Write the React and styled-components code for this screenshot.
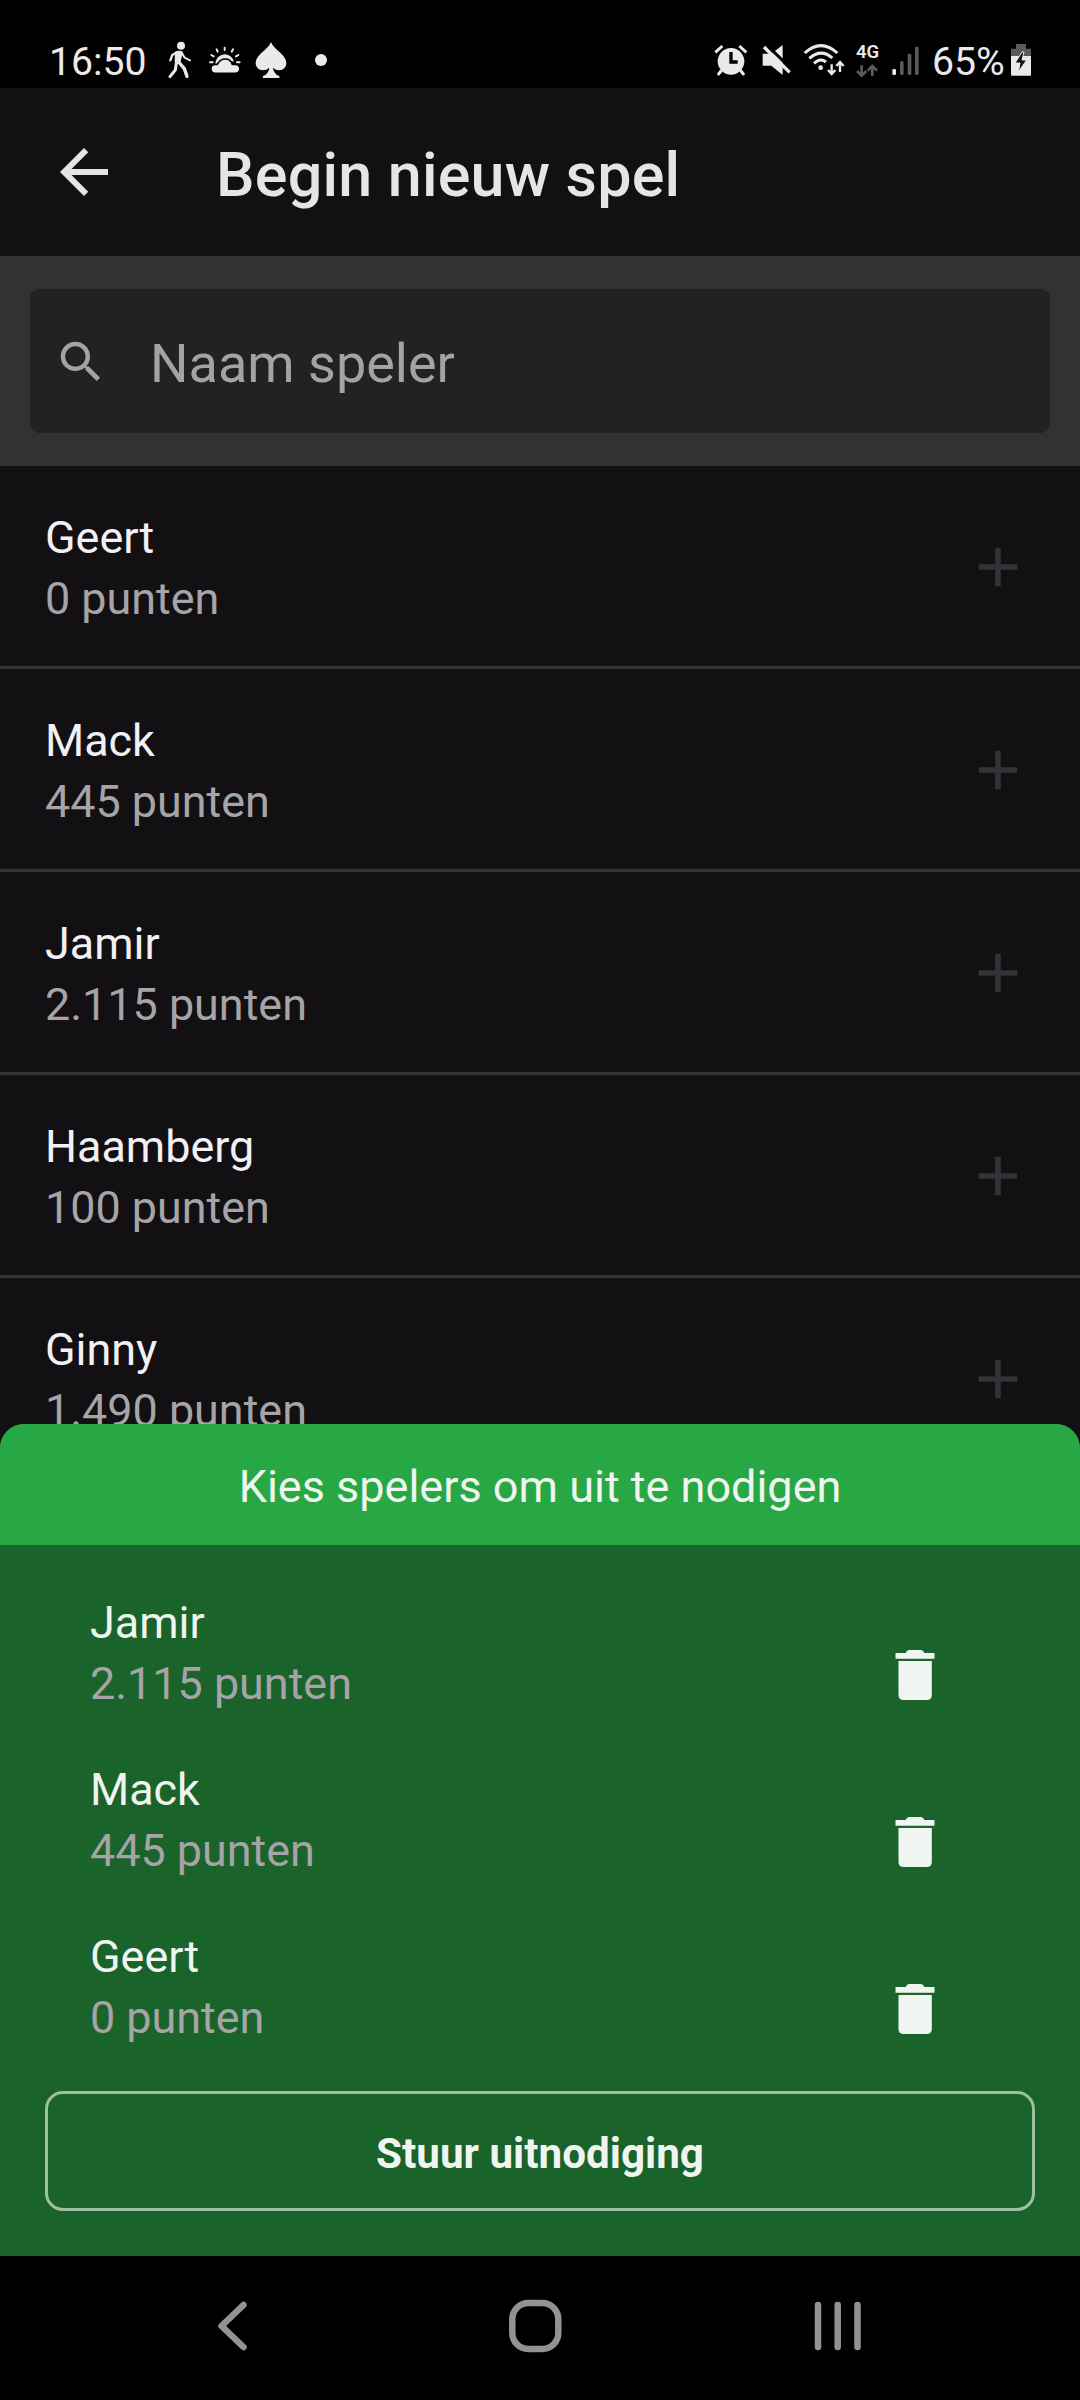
import React from 'react';
import styled, { createGlobalStyle } from 'styled-components';

const GlobalStyle = createGlobalStyle`
  *, *::before, *::after { box-sizing: border-box; }
  html, body { margin: 0; padding: 0; background: #000; }
  button, input { font: inherit; border: 0; margin: 0; padding: 0; background: none; }
`;

const Screen = styled.div`
  display: flex;
  flex-direction: column;
  width: 1080px;
  height: 2400px;
  overflow: hidden;
  background: #121013;
  font-family: Roboto, "Liberation Sans", sans-serif;
  color: #f2f0f3;
`;

const StatusBar = styled.div`
  display: flex;
  align-items: center;
  justify-content: space-between;
  flex: none;
  height: 88px;
  padding: 32px 48px 0 49px;
  background: #000;
  color: #ebe9ec;
`;

const StatusGroup = styled.div`
  display: flex;
  align-items: center;
`;

const StatusText = styled.span`
  width: ${(p) => p.$width}px;
  margin-left: ${(p) => p.$gap || 0}px;
  padding-top: 4px;
  font-size: 39.2px;
  line-height: 46px;
  white-space: nowrap;
`;

const StatusGlyph = styled.svg`
  display: block;
  flex: none;
  height: 38px;
  margin-left: ${(p) => p.$gap}px;
`;

const NetworkType = styled.div`
  display: flex;
  flex-direction: column;
  width: 24px;
  height: 38px;
  margin-left: 10px;
  font-size: 18.5px;
  font-weight: 600;
  line-height: 22px;
`;

const NetworkArrows = styled.svg`
  display: block;
  width: 24px;
  height: 16px;
`;

const Header = styled.header`
  display: flex;
  align-items: center;
  flex: none;
  height: 168px;
  padding: 0 48px;
  gap: 96px;
  color: #e6e4e7;
`;

const Title = styled.h1`
  margin: 5px 0 0;
  font-size: 61px;
  font-weight: 500;
  line-height: 72px;
  letter-spacing: 0.22px;
`;

const Icon = styled.svg`
  display: block;
  flex: none;
  width: ${(p) => p.$size}px;
  height: ${(p) => p.$size}px;
  fill: currentColor;
`;

const SearchBand = styled.div`
  flex: none;
  height: 210px;
  padding: 33px 30px;
  background: #343134;
`;

const SearchField = styled.label`
  display: flex;
  align-items: center;
  gap: 42px;
  height: 144px;
  padding: 2px 24px 0;
  border-radius: 9px;
  background: #232124;
  color: #a4a2a5;
`;

const SearchInput = styled.input`
  flex: 1;
  height: 72px;
  margin-top: 2px;
  font-size: 54px;
  color: #f2f0f3;
  outline: none;
  &::placeholder { color: #a4a2a5; opacity: 1; }
`;

const PlayerList = styled.div`
  flex: 1 1 0;
  min-height: 0;
  overflow: hidden;
`;

const PlayerRow = styled.div`
  display: flex;
  align-items: flex-start;
  justify-content: space-between;
  height: 203px;
  padding: 41px 49px 0 45px;
  border-bottom: 3px solid #343236;
`;

const PlayerText = styled.div`
  display: flex;
  flex-direction: column;
  font-size: 44.9px;
  line-height: 61px;
`;

const Points = styled.span`
  color: #a6a4a6;
`;

const AddButton = styled.button`
  display: block;
  margin-top: 27px;
  color: #343236;
`;

const Sheet = styled.section`
  position: relative;
  display: flex;
  flex-direction: column;
  flex: none;
  height: 832px;
  margin-top: -24px;
  border-radius: 24px 24px 0 0;
  overflow: hidden;
  background: #1a632a;
  color: #f0f5f0;
`;

const SheetTitle = styled.h2`
  flex: none;
  margin: 0;
  height: 121px;
  padding-top: 2px;
  background: #27a844;
  text-align: center;
  font-size: 45px;
  font-weight: 400;
  line-height: 121px;
`;

const InviteList = styled.div`
  display: flex;
  flex-direction: column;
  gap: 45px;
  padding: 47px 145px 0 90px;
`;

const InviteRow = styled.div`
  display: flex;
  justify-content: space-between;
  height: 122px;
`;

const DeleteButton = styled.button`
  display: block;
  align-self: flex-start;
  margin-top: 58px;
  color: #f1f5f1;
`;

const TrashGlyph = styled.svg`
  display: block;
  width: 40px;
  height: 50px;
  fill: currentColor;
`;

const SendButton = styled.button`
  height: 120px;
  margin: 43px 45px 0;
  padding-top: 4px;
  border: 3px solid #9dc0a2;
  border-radius: 18px;
  color: #f0f5f0;
  font-size: 42.2px;
  font-weight: 700;
`;

const NavBar = styled.nav`
  display: flex;
  align-items: center;
  justify-content: space-between;
  flex: none;
  height: 144px;
  padding: 0 217px 4px 216px;
  background: #000;
`;

const NavGlyph = styled.svg`
  display: block;
  width: ${(p) => p.$width}px;
  height: 56px;
  fill: none;
  stroke: #929193;
  stroke-width: 6.5;
  stroke-linecap: round;
  stroke-linejoin: round;
`;

const players = [
  { name: 'Geert', points: '0' },
  { name: 'Mack', points: '445' },
  { name: 'Jamir', points: '2.115' },
  { name: 'Haamberg', points: '100' },
  { name: 'Ginny', points: '1.490' },
];

const invited = [players[2], players[1], players[0]];

function Glyph({ x, width, gap, children }) {
  return (
    <StatusGlyph $gap={gap} width={width / 3} viewBox={`${x} 63 ${width} 114`} fill="none" stroke="none">
      {children}
    </StatusGlyph>
  );
}

function Status() {
  const light = '#ebe9ec';
  const dim = '#5a595b';
  return (
    <StatusBar>
      <StatusGroup>
        <StatusText $width={101}>16:50</StatusText>
        <Glyph x={414} width={72} gap={18}>
          <circle cx="453" cy="77" r="12" fill={light} />
          <path d="M435 95Q449 89 458 95L455 112L452 124L440 136L434 124Z" fill={light} />
          <g stroke={light} strokeLinecap="round" strokeLinejoin="round">
            <path d="M421 121L427 105L441 97" strokeWidth="7" />
            <path d="M455 98L464 113L480 121" strokeWidth="6" />
            <path d="M439 128L436 150L420 170" strokeWidth="9" />
            <path d="M446 126L463 146L471 169" strokeWidth="10" />
          </g>
        </Glyph>
        <Glyph x={537} width={96} gap={17}>
          <path d="M584 83V90M560 88L563 95M609 88L605 95M544 105L551 109M625 105L618 109M540 127H548M621 127H629" stroke={light} strokeWidth="6" strokeLinecap="round" />
          <path d="M556 132a28.500 28.500 0 0 1 56-8z" fill={light} />
          <path d="M556 160a13 13 0 0 1 0-27h6c5-10 14-16 24-16s18 6 21 16h9a13 13 0 0 1 0 27z" fill={light} stroke="#000" strokeWidth="5" />
        </Glyph>
        <Glyph x={675} width={96} gap={14}>
          <path d="M723 66C714 91 677 103 677 129C677 151 703 157 718 143C716 157 709 164 699 168Q696 174 701 174H746Q751 172 748 168C738 164 731 157 729 143C744 157 769 151 769 129C769 103 732 91 723 66Z" fill={light} />
        </Glyph>
        <Glyph x={855} width={36} gap={28}>
          <circle cx="873" cy="120" r="18" fill={light} />
        </Glyph>
      </StatusGroup>
      <StatusGroup>
        <Glyph x={42} width={102} gap={0}>
          <circle cx="93" cy="124" r="40" fill={light} />
          <path d="M46 97L67 78M139 97L118 78" stroke={light} strokeWidth="9" />
          <path d="M63 153L56 162M123 153L130 162" stroke={light} strokeWidth="9" strokeLinecap="round" />
          <path d="M93 96V126H113" stroke="#000" strokeWidth="10" />
        </Glyph>
        <Glyph x={187} width={87} gap={14}>
          <path d="M189 101H215L249 75V165L215 137H189Z" fill={light} />
          <path d="M200 74L277 149" stroke="#000" strokeWidth="9" />
          <path d="M193 81L270 157" stroke={light} strokeWidth="10" />
        </Glyph>
        <Glyph x={309} width={129} gap={12}>
          <g stroke={light} strokeWidth="9">
            <path d="M314 99Q363 55 412 99" />
            <path d="M328 115Q363 84 397 114" />
            <path d="M342 130Q361 112 378 126" />
          </g>
          <circle cx="362" cy="143" r="7" fill={light} />
          <path d="M395 133V160M384 150L395 162L406 150M420 156V127M409 138L420 126L431 138" stroke={light} strokeWidth="7" />
        </Glyph>
        <NetworkType>
          4G
          <NetworkArrows viewBox="0 0 72 48" fill="none" stroke={dim} strokeWidth="8">
            <path d="M17 7V36M3 24L17 38L31 24M49 39V11M35 23L49 9L63 23" />
          </NetworkArrows>
        </NetworkType>
        <Glyph x={576} width={81} gap={12}>
          <rect x="577" y="147" width="11" height="18" rx="4" fill={light} />
          <rect x="600" y="124" width="11" height="41" rx="4" fill={dim} />
          <rect x="623" y="101" width="11" height="64" rx="4" fill={dim} />
          <rect x="645" y="80" width="11" height="85" rx="4" fill={dim} />
        </Glyph>
        <StatusText $width={73} $gap={13}>65%</StatusText>
        <Glyph x={933} width={63} gap={6}>
          <path d="M948 72H978V86H993V110H933V86H948Z" fill={dim} />
          <path d="M933 108H993V164Q993 167 990 167H936Q933 167 933 164Z" fill={light} />
          <path d="M966 96L945 129H960L955 156L980 120H966L972 96Z" fill="#111" stroke={light} strokeWidth="3" />
        </Glyph>
      </StatusGroup>
    </StatusBar>
  );
}

function Player({ player }) {
  return (
    <PlayerText>
      <span>{player.name}</span>
      <Points>{player.points} punten</Points>
    </PlayerText>
  );
}

export default function App() {
  return (
    <>
      <GlobalStyle />
      <Screen>
        <Status />
        <Header>
          <Icon $size={72} viewBox="0 0 24 24">
            <path d="M20 11H7.830l5.590-5.590L12 4l-8 8 8 8 1.410-1.410L7.830 13H20v-2z" />
          </Icon>
          <Title>Begin nieuw spel</Title>
        </Header>
        <SearchBand>
          <SearchField>
            <Icon $size={54} viewBox="0 0 24 24">
              <path d="M15.500 14h-.790l-.280-.270A6.470 6.470 0 0 0 16 9.500 6.500 6.500 0 1 0 9.500 16c1.610 0 3.090-.590 4.230-1.570l.270.280v.790l5 4.990L20.490 19l-4.990-5zm-6 0C7.010 14 5 11.990 5 9.500S7.010 5 9.500 5 14 7.010 14 9.500 11.990 14 9.500 14z" />
            </Icon>
            <SearchInput placeholder="Naam speler" />
          </SearchField>
        </SearchBand>
        <PlayerList>
          {players.map((player) => (
            <PlayerRow key={player.name}>
              <Player player={player} />
              <AddButton aria-label="Toevoegen">
                <Icon $size={66} viewBox="0 0 24 24">
                  <path d="M19 13h-6v6h-2v-6H5v-2h6V5h2v6h6v2z" />
                </Icon>
              </AddButton>
            </PlayerRow>
          ))}
        </PlayerList>
        <Sheet>
          <SheetTitle>Kies spelers om uit te nodigen</SheetTitle>
          <InviteList>
            {invited.map((player) => (
              <InviteRow key={player.name}>
                <Player player={player} />
                <DeleteButton aria-label="Verwijderen">
                  <TrashGlyph viewBox="0 0 40 50">
                    <path d="M0.500 3H10.500Q12 0 14 0H26Q28 0 29.500 3H39.500V8.700H0.500Z" />
                    <path d="M3.500 11H36.800V45Q36.800 50 31.800 50H8.500Q3.500 50 3.500 45Z" />
                  </TrashGlyph>
                </DeleteButton>
              </InviteRow>
            ))}
          </InviteList>
          <SendButton>Stuur uitnodiging</SendButton>
        </Sheet>
        <NavBar>
          <NavGlyph $width={32} viewBox="0 0 32 56">
            <path d="M27.500 7L5.500 28L27.500 49" />
          </NavGlyph>
          <NavGlyph $width={64} viewBox="0 0 64 56">
            <rect x="13.300" y="5" width="46" height="46" rx="16" />
          </NavGlyph>
          <NavGlyph $width={50} viewBox="0 0 50 56">
            <path d="M5 7V49M24.700 7V49M44.500 7V49" />
          </NavGlyph>
        </NavBar>
      </Screen>
    </>
  );
}
